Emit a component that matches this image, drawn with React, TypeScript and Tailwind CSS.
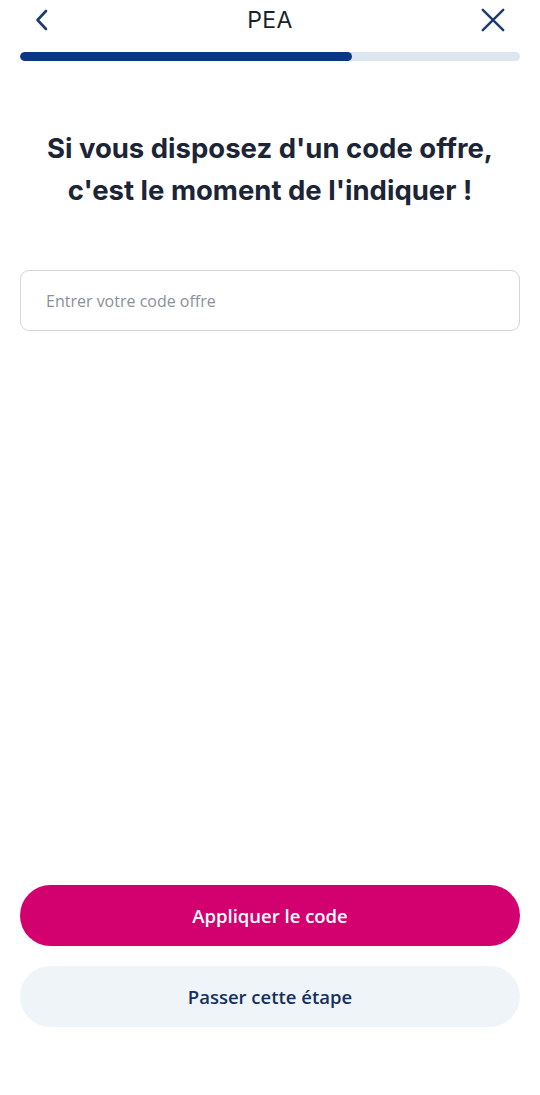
import React from "react";

export default function App() {
  return (
    <div
      className="w-[540px] h-[1095px] bg-white flex flex-col px-5"
      style={{ fontFamily: '"Open Sans", "Liberation Sans", sans-serif' }}
    >
      <div className="h-[40px] flex items-center justify-between">
        <div className="w-[40px] flex items-center pl-[14px]">
          <svg width="16" height="24" viewBox="0 0 16 24" fill="none">
            <path d="M12 3 L3.5 12 L12 21" stroke="#1b3a6e" strokeWidth="2.6" strokeLinecap="round" strokeLinejoin="round" />
          </svg>
        </div>
        <div className="text-[23px] text-[#1a1f2b] leading-none tracking-[0.3px]" style={{ fontFamily: 'Inter, "Open Sans", sans-serif' }}>PEA</div>
        <div className="w-[40px] flex items-center justify-end pr-[14px]">
          <svg width="28" height="28" viewBox="0 0 28 28" fill="none">
            <path d="M3 3 L25 25 M25 3 L3 25" stroke="#1b3a6e" strokeWidth="2.6" strokeLinecap="round" />
          </svg>
        </div>
      </div>
      <div className="mt-[12px] h-[9px] w-full rounded-full bg-[#dde5f0] overflow-hidden">
        <div className="h-full w-[332px] rounded-full bg-[#0a3784]" />
      </div>
      <h1
        className="mt-[66px] text-center text-[27.5px] font-bold leading-[42px] text-[#1c2536]"
        style={{ fontFamily: 'Inter, "Open Sans", sans-serif' }}
      >
        Si vous disposez d'un code offre,
        <br />
        c'est le moment de l'indiquer !
      </h1>
      <div className="mt-[59px] h-[61px] rounded-[9px] border border-[#d3d6da] flex items-center px-[25px]">
        <span className="text-[16px] text-[#8b9098]">Entrer votre code offre</span>
      </div>
      <div className="flex-1" />
      <button className="h-[61px] w-full rounded-full bg-[#d3006f] text-white text-[18.5px] font-semibold">
        Appliquer le code
      </button>
      <button className="mt-[20px] h-[61px] w-full rounded-full bg-[#eff4f9] text-[#16305e] text-[18.5px] font-semibold">
        Passer cette étape
      </button>
      <div className="h-[68px]" />
    </div>
  );
}
